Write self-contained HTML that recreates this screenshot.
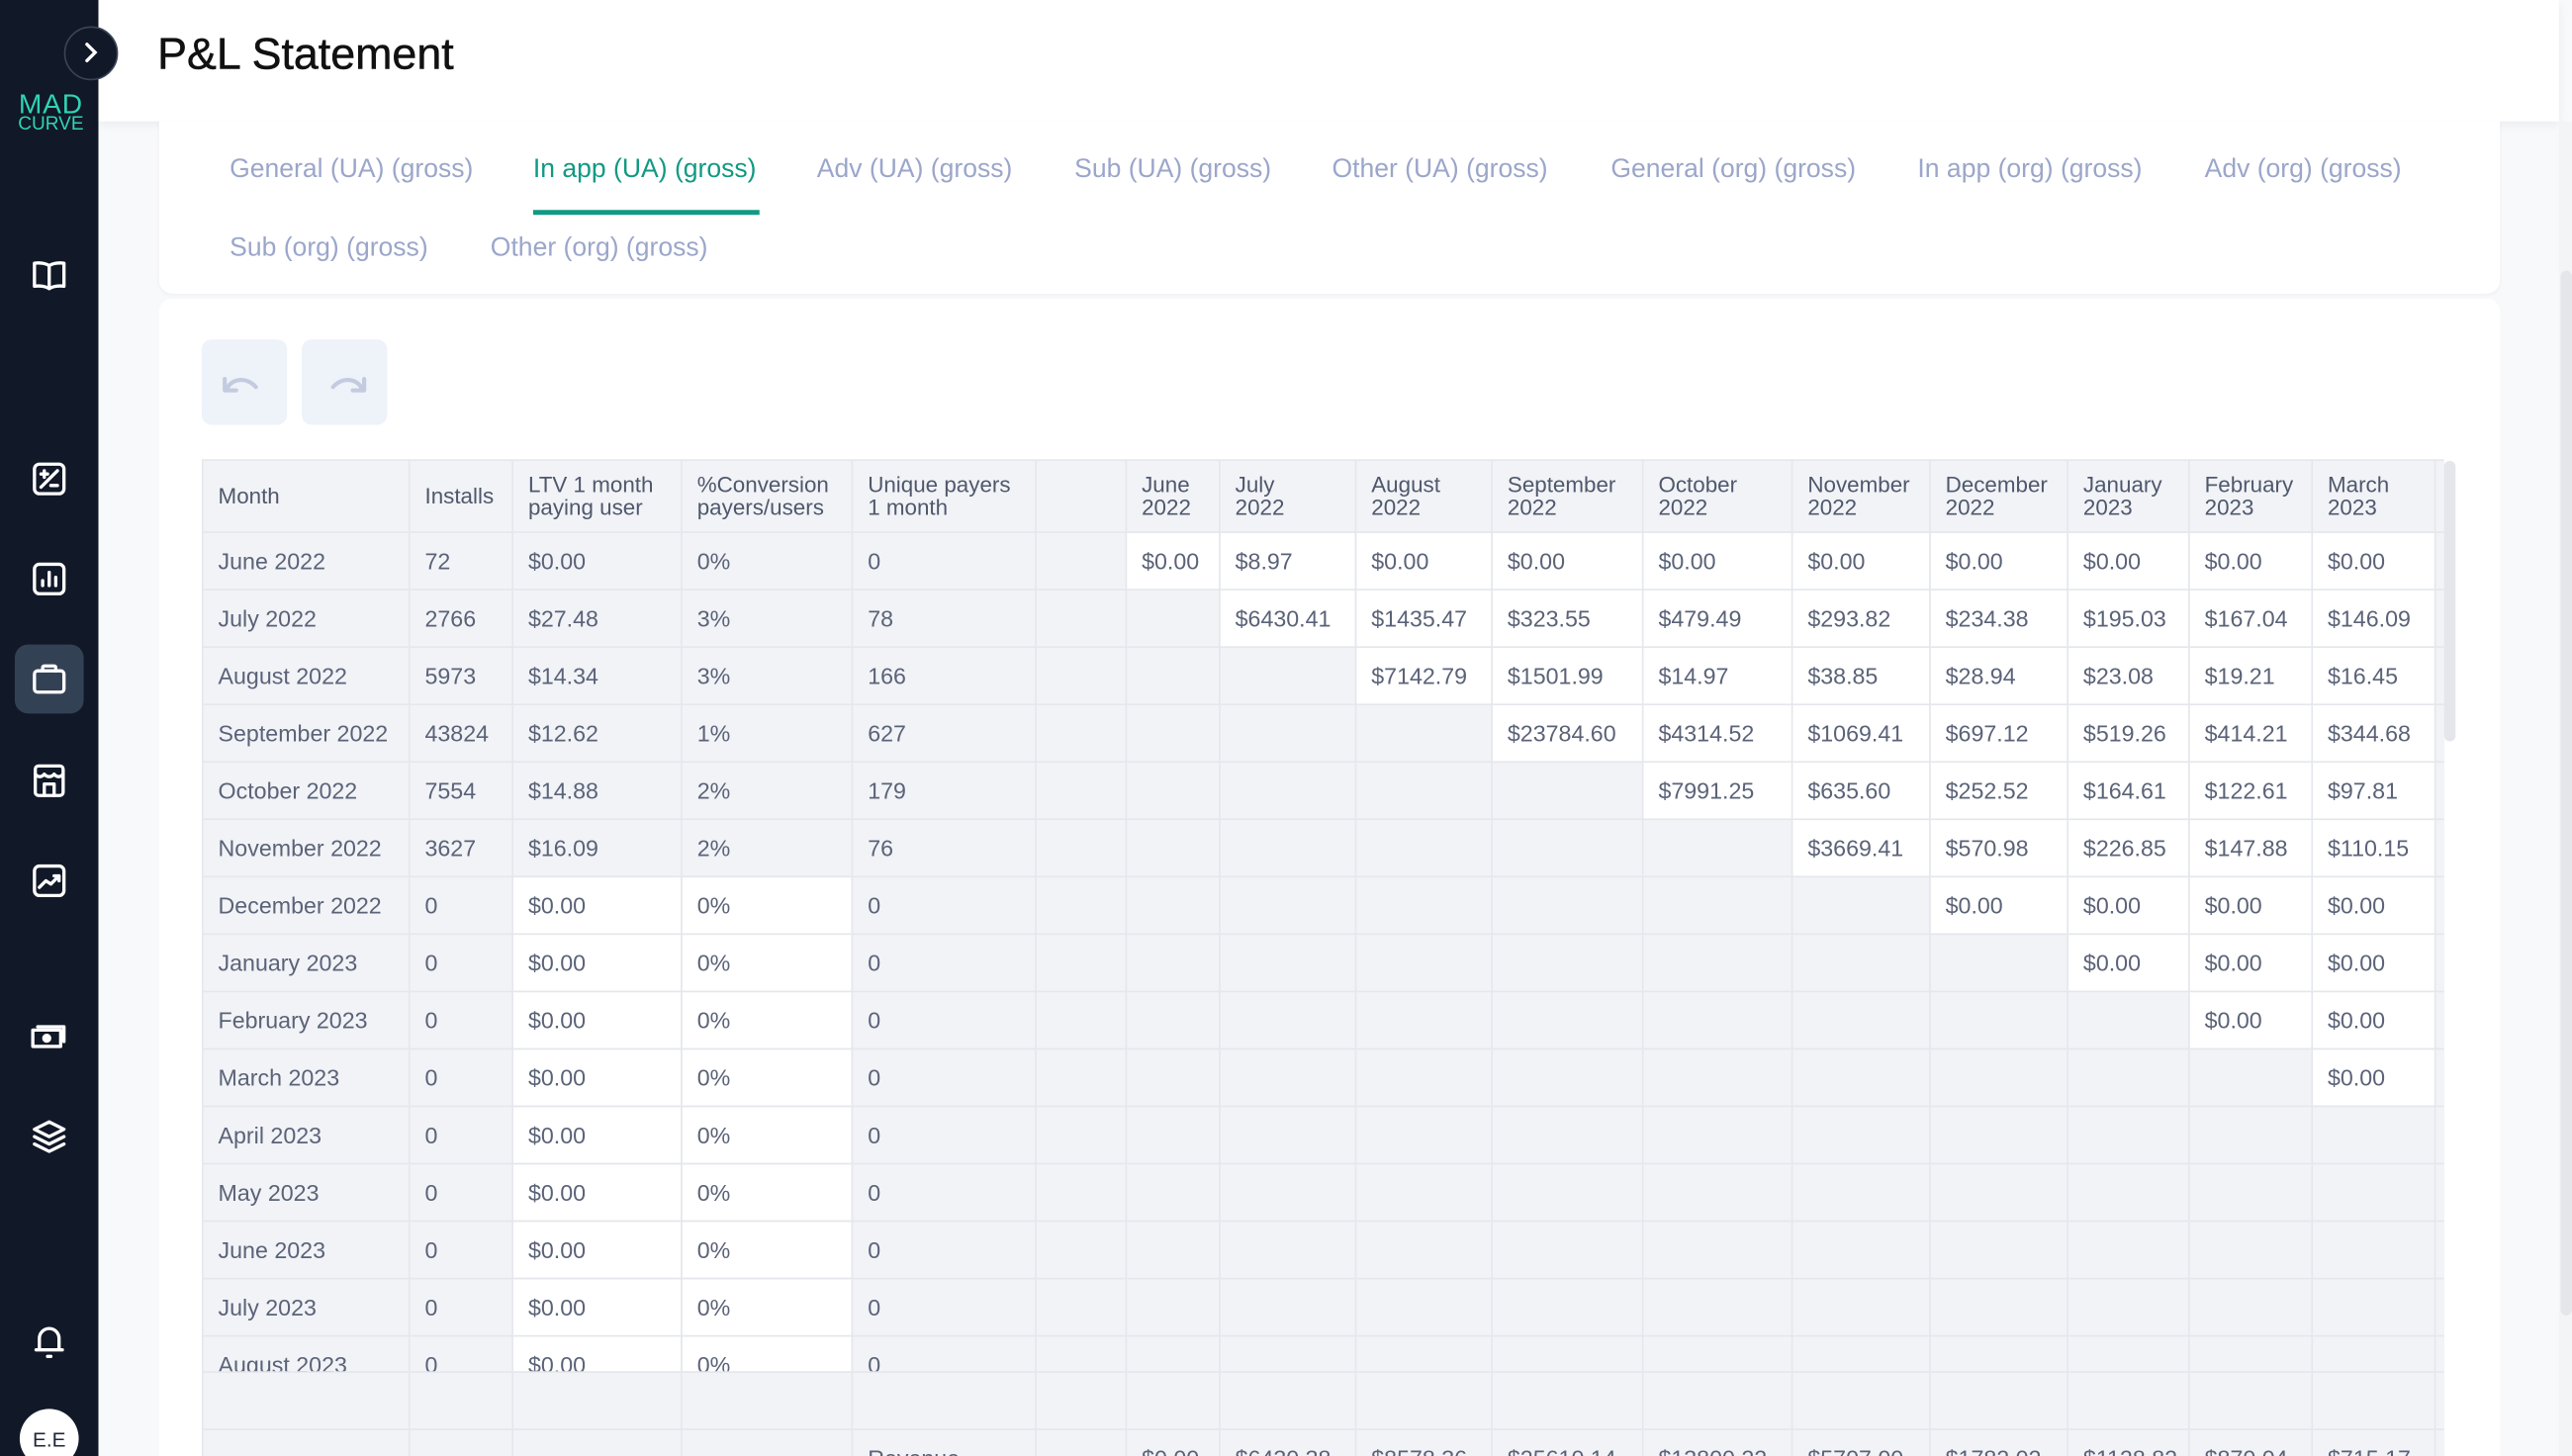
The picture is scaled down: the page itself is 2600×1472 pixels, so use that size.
<!DOCTYPE html>
<html><head><meta charset="utf-8">
<style>
*{box-sizing:border-box;margin:0;padding:0}
html,body{width:2600px;height:1472px;overflow:hidden;background:#f8f9fb}
#w{position:absolute;left:0;top:0;width:1568px;height:888px;overflow:hidden;transform:scale(1.6582);transform-origin:0 0;font-family:"Liberation Sans",sans-serif;background:#f8f9fb}
.abs{position:absolute}
#side{left:0;top:0;width:60px;height:888px;background:#111827}
.ic{position:absolute;left:18px;width:24px;height:24px}
.ic svg{width:24px;height:24px;fill:none;stroke:#fff;stroke-width:2;stroke-linecap:round;stroke-linejoin:round}
#hdr{left:60px;top:0;width:1500px;height:74px;background:#fff;box-shadow:0 2px 6px rgba(0,0,0,.06)}
.tab{position:absolute;font-size:16px;color:#9ba6ca;white-space:nowrap}
.card{position:absolute;left:97px;width:1427px;background:#fff;border-radius:8px}
table{border-collapse:collapse;table-layout:fixed;width:1367px;font-size:14px;color:#5b6378}
td,th{border:1px solid #e5e7ec;background:#f1f3f7;padding:0 0 0 9px;text-align:left;white-space:nowrap;overflow:hidden}
th{font-weight:normal;font-size:13.5px;color:#4f586c;line-height:14px;height:44px;vertical-align:middle}
td{height:35px}
td.w{background:#fff}
</style></head><body><div id="w">
<div id="side" class="abs">
 <div class="abs" style="left:39px;top:16px;width:33px;height:33px;border-radius:50%;background:#111827;border:1.5px solid #3a4356;z-index:3"><svg width="30" height="30" viewBox="0 0 30 30" style="position:absolute;left:0;top:0"><path d="M13 10l5 5-5 5" stroke="#fff" stroke-width="2" fill="none" stroke-linecap="round"/></svg></div>
 <div class="abs" style="left:8px;top:57px;width:46px;color:#2fd3b5;line-height:13px;text-align:center"><div style="font-size:17px;letter-spacing:0.5px">MAD</div><div style="font-size:11.5px">CURVE</div></div>
 <div class="ic" style="top:156px"><svg viewBox="0 0 24 24"><path d="M12 6C10 4.5 6 4 3 4.5v14c3-.5 7 0 9 1.5 2-1.5 6-2 9-1.5v-14C18 4 14 4.5 12 6zM12 6v14"/></svg></div>
 <div class="ic" style="top:280px"><svg viewBox="0 0 24 24"><rect x="3" y="3" width="18" height="18" rx="3"/><path d="M7 17L17 7M7 9h4M9 7v4M13 16h4"/></svg></div>
 <div class="ic" style="top:341px"><svg viewBox="0 0 24 24"><rect x="3" y="3" width="18" height="18" rx="3"/><path d="M8 16v-3M12 16V8M16 16v-5"/></svg></div>
 <div class="abs" style="left:9px;top:393px;width:42px;height:42px;border-radius:8px;background:#334155"></div>
 <div class="ic" style="top:402px"><svg viewBox="0 0 24 24"><rect x="3" y="7" width="18" height="13" rx="2"/><path d="M8 7V5a1 1 0 0 1 1-1h6a1 1 0 0 1 1 1v2"/></svg></div>
 <div class="ic" style="top:464px"><svg viewBox="0 0 24 24"><rect x="3.5" y="3" width="17" height="18" rx="2"/><path d="M3.5 8c1.5 2 4 2 5.5 0 1.5 2 4.5 2 6 0 1.5 2 4 2 5.5 0M9 21v-7h6v7"/></svg></div>
 <div class="ic" style="top:525px"><svg viewBox="0 0 24 24"><rect x="3" y="3" width="18" height="18" rx="3"/><path d="M6 16l4-4 3 2 5-5M15 9h3v3"/></svg></div>
 <div class="ic" style="top:620px"><svg viewBox="0 0 24 24"><rect x="2" y="8" width="17" height="10"/><circle cx="10.5" cy="13" r="1.8" fill="#fff"/><path d="M5 6h16v9"/></svg></div>
 <div class="ic" style="top:681px"><svg viewBox="0 0 24 24"><path d="M12 3l9 4.5-9 4.5-9-4.5zM3 12l9 4.5 9-4.5M3 16.5L12 21l9-4.5"/></svg></div>
 <div class="ic" style="top:806px"><svg viewBox="0 0 24 24"><path d="M6 17V10a6 6 0 0 1 12 0v7zM4 17h16M11 21h2"/></svg></div>
 <div class="abs" style="left:12px;top:859px;width:36px;height:36px;border-radius:50%;background:#fff;color:#1f2937;font-size:12.5px;text-align:center;line-height:38px">E.E</div>
</div>
<div id="hdr" class="abs"><div class="abs" style="left:36px;top:18px;font-size:27px;color:#111;-webkit-text-stroke:0.3px #111">P&amp;L Statement</div></div>
<div class="abs" style="left:1560px;top:74px;width:8px;height:814px;background:#f3f4f6"></div>
<div class="abs" style="left:1561px;top:165px;width:7px;height:637px;border-radius:4px;background:#e4e6ea"></div>

<div class="card" style="top:74px;height:105px;border-radius:0 0 8px 8px;box-shadow:0 1px 2px rgba(0,0,0,.04)">
 <div class="tab" style="left:43px;top:21px">General (UA) (gross)</div>
 <div class="tab" style="left:228px;top:21px;color:#109a82">In app (UA) (gross)</div>
 <div class="abs" style="left:228px;top:54px;width:138px;height:2.5px;background:#109a82"></div>
 <div class="tab" style="left:401px;top:21px">Adv (UA) (gross)</div>
 <div class="tab" style="left:558px;top:21px">Sub (UA) (gross)</div>
 <div class="tab" style="left:715px;top:21px">Other (UA) (gross)</div>
 <div class="tab" style="left:885px;top:21px">General (org) (gross)</div>
 <div class="tab" style="left:1072px;top:21px">In app (org) (gross)</div>
 <div class="tab" style="left:1247px;top:21px">Adv (org) (gross)</div>
 <div class="tab" style="left:43px;top:69px">Sub (org) (gross)</div>
 <div class="tab" style="left:202px;top:69px">Other (org) (gross)</div>
</div>
<div class="card" style="top:182px;height:720px"></div>
<div class="abs" style="left:123px;top:207px;width:52px;height:52px;border-radius:6px;background:#eef2f9"><svg width="52" height="52" viewBox="0 0 52 52"><path d="M15 31c2-7 12-9 18-2M14 24v7h7" stroke="#c3cbe0" stroke-width="2.5" fill="none" stroke-linecap="round" stroke-linejoin="round"/></svg></div>
<div class="abs" style="left:184px;top:207px;width:52px;height:52px;border-radius:6px;background:#eef2f9"><svg width="52" height="52" viewBox="0 0 52 52"><path d="M37 31c-2-7-12-9-18-2M38 24v7h-7" stroke="#c3cbe0" stroke-width="2.5" fill="none" stroke-linecap="round" stroke-linejoin="round"/></svg></div>

<div class="abs" style="left:123px;top:280px;width:1367px;height:608px;background:#f1f3f7;overflow:hidden">
<div style="height:556px;overflow:hidden">
<table id="t1">
<colgroup><col style="width:126px"><col style="width:63px"><col style="width:103px"><col style="width:104px"><col style="width:112px"><col style="width:55px"><col style="width:57px"><col style="width:83px"><col style="width:83px"><col style="width:92px"><col style="width:91px"><col style="width:84px"><col style="width:84px"><col style="width:74px"><col style="width:75px"><col style="width:75px"><col style="width:6px"></colgroup>
<tr><th>Month</th><th>Installs</th><th>LTV 1 month<br>paying user</th><th>%Conversion<br>payers/users</th><th>Unique payers<br>1 month</th><th></th><th>June<br>2022</th><th>July<br>2022</th><th>August<br>2022</th><th>September<br>2022</th><th>October<br>2022</th><th>November<br>2022</th><th>December<br>2022</th><th>January<br>2023</th><th>February<br>2023</th><th>March<br>2023</th><th></th></tr>
<tr><td>June 2022</td><td>72</td><td>$0.00</td><td>0%</td><td>0</td><td></td><td class="w">$0.00</td><td class="w">$8.97</td><td class="w">$0.00</td><td class="w">$0.00</td><td class="w">$0.00</td><td class="w">$0.00</td><td class="w">$0.00</td><td class="w">$0.00</td><td class="w">$0.00</td><td class="w">$0.00</td><td></td></tr>
<tr><td>July 2022</td><td>2766</td><td>$27.48</td><td>3%</td><td>78</td><td></td><td></td><td class="w">$6430.41</td><td class="w">$1435.47</td><td class="w">$323.55</td><td class="w">$479.49</td><td class="w">$293.82</td><td class="w">$234.38</td><td class="w">$195.03</td><td class="w">$167.04</td><td class="w">$146.09</td><td></td></tr>
<tr><td>August 2022</td><td>5973</td><td>$14.34</td><td>3%</td><td>166</td><td></td><td></td><td></td><td class="w">$7142.79</td><td class="w">$1501.99</td><td class="w">$14.97</td><td class="w">$38.85</td><td class="w">$28.94</td><td class="w">$23.08</td><td class="w">$19.21</td><td class="w">$16.45</td><td></td></tr>
<tr><td>September 2022</td><td>43824</td><td>$12.62</td><td>1%</td><td>627</td><td></td><td></td><td></td><td></td><td class="w">$23784.60</td><td class="w">$4314.52</td><td class="w">$1069.41</td><td class="w">$697.12</td><td class="w">$519.26</td><td class="w">$414.21</td><td class="w">$344.68</td><td></td></tr>
<tr><td>October 2022</td><td>7554</td><td>$14.88</td><td>2%</td><td>179</td><td></td><td></td><td></td><td></td><td></td><td class="w">$7991.25</td><td class="w">$635.60</td><td class="w">$252.52</td><td class="w">$164.61</td><td class="w">$122.61</td><td class="w">$97.81</td><td></td></tr>
<tr><td>November 2022</td><td>3627</td><td>$16.09</td><td>2%</td><td>76</td><td></td><td></td><td></td><td></td><td></td><td></td><td class="w">$3669.41</td><td class="w">$570.98</td><td class="w">$226.85</td><td class="w">$147.88</td><td class="w">$110.15</td><td></td></tr>
<tr><td>December 2022</td><td>0</td><td class="w">$0.00</td><td class="w">0%</td><td>0</td><td></td><td></td><td></td><td></td><td></td><td></td><td></td><td class="w">$0.00</td><td class="w">$0.00</td><td class="w">$0.00</td><td class="w">$0.00</td><td></td></tr>
<tr><td>January 2023</td><td>0</td><td class="w">$0.00</td><td class="w">0%</td><td>0</td><td></td><td></td><td></td><td></td><td></td><td></td><td></td><td></td><td class="w">$0.00</td><td class="w">$0.00</td><td class="w">$0.00</td><td></td></tr>
<tr><td>February 2023</td><td>0</td><td class="w">$0.00</td><td class="w">0%</td><td>0</td><td></td><td></td><td></td><td></td><td></td><td></td><td></td><td></td><td></td><td class="w">$0.00</td><td class="w">$0.00</td><td></td></tr>
<tr><td>March 2023</td><td>0</td><td class="w">$0.00</td><td class="w">0%</td><td>0</td><td></td><td></td><td></td><td></td><td></td><td></td><td></td><td></td><td></td><td></td><td class="w">$0.00</td><td></td></tr>
<tr><td>April 2023</td><td>0</td><td class="w">$0.00</td><td class="w">0%</td><td>0</td><td></td><td></td><td></td><td></td><td></td><td></td><td></td><td></td><td></td><td></td><td></td><td></td></tr>
<tr><td>May 2023</td><td>0</td><td class="w">$0.00</td><td class="w">0%</td><td>0</td><td></td><td></td><td></td><td></td><td></td><td></td><td></td><td></td><td></td><td></td><td></td><td></td></tr>
<tr><td>June 2023</td><td>0</td><td class="w">$0.00</td><td class="w">0%</td><td>0</td><td></td><td></td><td></td><td></td><td></td><td></td><td></td><td></td><td></td><td></td><td></td><td></td></tr>
<tr><td>July 2023</td><td>0</td><td class="w">$0.00</td><td class="w">0%</td><td>0</td><td></td><td></td><td></td><td></td><td></td><td></td><td></td><td></td><td></td><td></td><td></td><td></td></tr>
<tr><td>August 2023</td><td>0</td><td class="w">$0.00</td><td class="w">0%</td><td>0</td><td></td><td></td><td></td><td></td><td></td><td></td><td></td><td></td><td></td><td></td><td></td><td></td></tr>
</table></div>
<table>
<colgroup><col style="width:126px"><col style="width:63px"><col style="width:103px"><col style="width:104px"><col style="width:112px"><col style="width:55px"><col style="width:57px"><col style="width:83px"><col style="width:83px"><col style="width:92px"><col style="width:91px"><col style="width:84px"><col style="width:84px"><col style="width:74px"><col style="width:75px"><col style="width:75px"><col style="width:6px"></colgroup>
<tr><td></td><td></td><td></td><td></td><td></td><td></td><td></td><td></td><td></td><td></td><td></td><td></td><td></td><td></td><td></td><td></td><td></td></tr>
<tr><td></td><td></td><td></td><td></td><td>Revenue</td><td></td><td>$0.00</td><td>$6430.38</td><td>$8578.36</td><td>$25610.14</td><td>$13800.22</td><td>$5707.00</td><td>$1782.02</td><td>$1128.82</td><td>$870.04</td><td>$715.17</td><td></td></tr>
</table>
</div>
<div class="abs" style="left:1490px;top:281px;width:7px;height:171px;border-radius:4px;background:#e4e6eb"></div>
</div></body></html>
